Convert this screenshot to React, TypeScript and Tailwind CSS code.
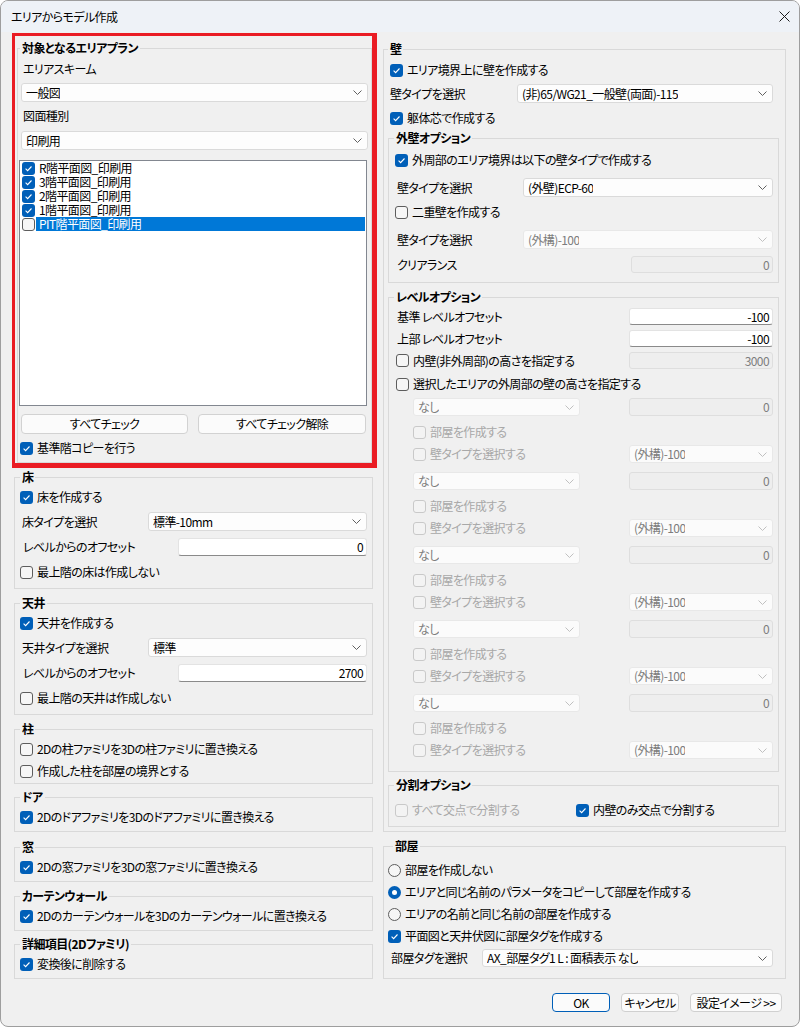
import React from "react";

function Box({ on, off }: { on?: boolean; off?: boolean }) {
  if (on)
    return (
      <span className="flex h-[13px] w-[13px] shrink-0 items-center justify-center rounded-[3px] bg-[#005fb8]">
        <svg width="9" height="9" viewBox="0 0 9 9">
          <path d="M1.6 4.7 3.6 6.6 7.5 2.5" fill="none" stroke="#ffffff" strokeWidth="1.1" />
        </svg>
      </span>
    );
  return (
    <span
      className={
        "h-[13px] w-[13px] shrink-0 rounded-[3px] border " +
        (off ? "border-[#c9c9c9] bg-[#f3f3f3]" : "border-[#5d5d5d] bg-[#f6f6f6]")
      }
    />
  );
}

function Radio({ on }: { on?: boolean }) {
  if (on)
    return (
      <span className="flex h-[13px] w-[13px] shrink-0 items-center justify-center rounded-full bg-[#005fb8]">
        <span className="h-[5px] w-[5px] rounded-full bg-white" />
      </span>
    );
  return <span className="h-[13px] w-[13px] shrink-0 rounded-full border border-[#5d5d5d] bg-[#f6f6f6]" />;
}

function Check({ label, on, off, className = "" }: { label: string; on?: boolean; off?: boolean; className?: string }) {
  return (
    <div className={"flex h-[16px] items-center gap-[4px] " + className}>
      <Box on={on} off={off} />
      <span className={"whitespace-nowrap " + (off ? "text-[#a8a8a8]" : "")}>{label}</span>
    </div>
  );
}

function RadioRow({ label, on, className = "" }: { label: string; on?: boolean; className?: string }) {
  return (
    <div className={"flex h-[16px] items-center gap-[4px] pl-[4px] " + className}>
      <Radio on={on} />
      <span className="whitespace-nowrap">{label}</span>
    </div>
  );
}

function Combo({ text, off, className = "" }: { text: string; off?: boolean; className?: string }) {
  return (
    <div
      className={
        "flex items-center justify-between rounded-[3px] border pl-[4px] pr-[5px] " +
        (off ? "border-[#e8e8e8] bg-[#fbfbfb] text-[#7d7d7d]" : "border-[#dadada] bg-[#fdfdfd]") +
        " " +
        className
      }
    >
      <span className="truncate whitespace-nowrap">{text}</span>
      <svg width="9" height="5" viewBox="0 0 9 5" className="shrink-0">
        <path d="M.5.5 4.5 4.5 8.5.5" fill="none" stroke={off ? "#c0c0c0" : "#606060"} />
      </svg>
    </div>
  );
}

function Num({ v, off, className = "" }: { v: string; off?: boolean; className?: string }) {
  return (
    <div
      className={
        "flex items-center justify-end rounded-[3px] border pr-[3px] " +
        (off ? "border-[#dedede] bg-[#eeeeee] text-[#7d7d7d]" : "border-[#e3e3e3] border-b-[#8a8a8a] bg-white") +
        " " +
        className
      }
    >
      {v}
    </div>
  );
}

function Legend({ title, className = "" }: { title: string; className?: string }) {
  return <legend className={"px-[2px] text-[12px] leading-[16px] font-bold " + className}>{title}</legend>;
}

const planItems: [string, boolean][] = [
  ["R階平面図_印刷用", true],
  ["3階平面図_印刷用", true],
  ["2階平面図_印刷用", true],
  ["1階平面図_印刷用", true],
  ["PIT階平面図_印刷用", false],
];

function HeightBlock({ first }: { first?: boolean }) {
  return (
    <div>
      <div className={"flex items-center pl-[24px] pr-[5px] " + (first ? "mt-[6px]" : "mt-[9px]")}>
        <Combo off text="なし" className="h-[18px] w-[167px]" />
        <Num off v="0" className="ml-auto h-[18px] w-[144px]" />
      </div>
      <Check off label="部屋を作成する" className="mt-[8px] pl-[24px]" />
      <div className="mt-[5px] flex items-center pl-[24px] pr-[5px]">
        <Check off label="壁タイプを選択する" />
        <Combo off text="(外構)-100" className="ml-auto h-[18px] w-[144px]" />
      </div>
    </div>
  );
}

export default function App() {
  return (
    <div className="h-[1028px] w-[801px] overflow-hidden bg-white font-['Noto_Sans_CJK_JP','Noto_Sans',sans-serif] text-[12px] leading-[16px] tracking-[-0.6px] text-black [font-feature-settings:'palt']">
      <div className="h-[1027px] w-[800px] overflow-hidden rounded-[8px] border border-[#9e9e9e] bg-[#f0f0f0]">
        {/* title bar */}
        <div className="flex h-[31px] items-center justify-between bg-[#eef2f7] pl-[10px] pr-[9px]">
          <span>エリアからモデル作成</span>
          <svg width="11" height="11" viewBox="0 0 11 11">
            <path d="M.5.5 10.5 10.5M10.5.5.5 10.5" stroke="#1a1a1a" strokeWidth="1" />
          </svg>
        </div>

        <div className="flex">
          {/* left column */}
          <div className="ml-[11px] mt-[1px] w-[365px]">
            <div className="border-[3px] border-r-[5px] border-b-[5px] border-[#ea1c24]">
              <fieldset className="ml-[2px] mt-[4px] border border-[#d9d9d9] pb-[6px]">
                <Legend title="対象となるエリアプラン" className="ml-[2px]" />
                <div className="mt-[3px] flex h-[20px] items-center pl-[5px]">エリアスキーム</div>
                <Combo text="一般図" className="mx-[3px] mt-[4px] h-[19px]" />
                <div className="mt-[4px] flex h-[20px] items-center pl-[5px]">図面種別</div>
                <Combo text="印刷用" className="mx-[3px] mt-[5px] h-[19px]" />
                <div className="ml-[1px] mt-[10px] h-[246px] w-[348px] border border-[#828790] bg-white pl-[2px] leading-[14px]">
                  {planItems.map(([t, on], i) => (
                    <div key={t} className="flex h-[14px] items-center">
                      <Box on={on} />
                      <span
                        className={
                          "ml-[1px] flex h-[14px] items-center whitespace-nowrap pl-[3px] " +
                          (i === 4 ? "w-[329px] bg-[#0078d7] text-white" : "")
                        }
                      >
                        {t}
                      </span>
                    </div>
                  ))}
                </div>
                <div className="ml-[3px] mt-[8px] flex gap-[10px]">
                  <button className="h-[20px] w-[167px] rounded-[4px] border border-[#d2d2d2] bg-[#fbfbfb]">すべてチェック</button>
                  <button className="h-[20px] w-[168px] rounded-[4px] border border-[#d2d2d2] bg-[#fbfbfb]">すべてチェック解除</button>
                </div>
                <Check on label="基準階コピーを行う" className="mt-[6px] pl-[2px]" />
              </fieldset>
            </div>

            <fieldset className="ml-[2px] mt-[1px] w-[359px] border border-[#d9d9d9] pb-[8px]">
              <Legend title="床" className="ml-[5px]" />
              <Check on label="床を作成する" className="mt-[4px] pl-[5px]" />
              <div className="mt-[7px] flex items-center pl-[7px] pr-[5px]">
                <span>床タイプを選択</span>
                <Combo text="標準-10mm" className="ml-auto h-[19px] w-[219px]" />
              </div>
              <div className="mt-[7px] flex items-center pl-[8px] pr-[5px]">
                <span>レベルからのオフセット</span>
                <Num v="0" className="ml-auto h-[18px] w-[189px]" />
              </div>
              <Check label="最上階の床は作成しない" className="mt-[8px] pl-[5px]" />
            </fieldset>

            <fieldset className="ml-[2px] mt-[6px] w-[359px] border border-[#d9d9d9] pb-[8px]">
              <Legend title="天井" className="ml-[5px]" />
              <Check on label="天井を作成する" className="mt-[4px] pl-[5px]" />
              <div className="mt-[7px] flex items-center pl-[7px] pr-[5px]">
                <span>天井タイプを選択</span>
                <Combo text="標準" className="ml-auto h-[19px] w-[219px]" />
              </div>
              <div className="mt-[7px] flex items-center pl-[8px] pr-[5px]">
                <span>レベルからのオフセット</span>
                <Num v="2700" className="ml-auto h-[18px] w-[189px]" />
              </div>
              <Check label="最上階の天井は作成しない" className="mt-[8px] pl-[5px]" />
            </fieldset>

            <fieldset className="ml-[2px] mt-[6px] w-[359px] border border-[#d9d9d9] pb-[4px]">
              <Legend title="柱" className="ml-[5px]" />
              <Check label="2Dの柱ファミリを3Dの柱ファミリに置き換える" className="mt-[4px] pl-[5px]" />
              <Check label="作成した柱を部屋の境界とする" className="mt-[6px] pl-[5px]" />
            </fieldset>

            <fieldset className="ml-[2px] mt-[5px] w-[359px] border border-[#d9d9d9] pb-[6px]">
              <Legend title="ドア" className="ml-[5px]" />
              <Check on label="2Dのドアファミリを3Dのドアファミリに置き換える" className="mt-[4px] pl-[5px]" />
            </fieldset>

            <fieldset className="ml-[2px] mt-[7px] w-[359px] border border-[#d9d9d9] pb-[6px]">
              <Legend title="窓" className="ml-[5px]" />
              <Check on label="2Dの窓ファミリを3Dの窓ファミリに置き換える" className="mt-[4px] pl-[5px]" />
            </fieldset>

            <fieldset className="ml-[2px] mt-[6px] w-[359px] border border-[#d9d9d9] pb-[6px]">
              <Legend title="カーテンウォール" className="ml-[5px]" />
              <Check on label="2Dのカーテンウォールを3Dのカーテンウォールに置き換える" className="mt-[4px] pl-[5px]" />
            </fieldset>

            <fieldset className="ml-[2px] mt-[5px] w-[359px] border border-[#d9d9d9] pb-[6px]">
              <Legend title="詳細項目(2Dファミリ)" className="ml-[5px]" />
              <Check on label="変換後に削除する" className="mt-[4px] pl-[5px]" />
            </fieldset>
          </div>

          {/* right column */}
          <div className="ml-[6px] mt-[9px] w-[403px]">
            <fieldset className="border border-[#d9d9d9] pb-[4px]">
              <Legend title="壁" className="ml-[4px]" />
              <Check on label="エリア境界上に壁を作成する" className="mt-[5px] pl-[6px]" />
              <div className="mt-[6px] flex items-center pl-[6px] pr-[12px]">
                <span>壁タイプを選択</span>
                <Combo text="(非)65/WG21_一般壁(両面)-115" className="ml-auto h-[19px] w-[256px]" />
              </div>
              <Check on label="躯体芯で作成する" className="mt-[7px] pl-[6px]" />

              <fieldset className="ml-[4px] mr-[6px] mt-[4px] border border-[#d9d9d9] pb-[9px]">
                <Legend title="外壁オプション" className="ml-[5px]" />
                <Check on label="外周部のエリア境界は以下の壁タイプで作成する" className="mt-[6px] pl-[6px]" />
                <div className="mt-[10px] flex items-center pl-[8px] pr-[5px]">
                  <span>壁タイプを選択</span>
                  <Combo text="(外壁)ECP-60" className="ml-auto h-[19px] w-[250px]" />
                </div>
                <Check label="二重壁を作成する" className="mt-[7px] pl-[6px]" />
                <div className="mt-[10px] flex items-center pl-[8px] pr-[5px]">
                  <span>壁タイプを選択</span>
                  <Combo off text="(外構)-100" className="ml-auto h-[19px] w-[250px]" />
                </div>
                <div className="mt-[7px] flex items-center pl-[8px] pr-[5px]">
                  <span>クリアランス</span>
                  <Num off v="0" className="ml-auto h-[17px] w-[142px]" />
                </div>
              </fieldset>

              <fieldset className="ml-[4px] mr-[6px] mt-[6px] border border-[#d9d9d9] pb-[12px]">
                <Legend title="レベルオプション" className="ml-[5px]" />
                <div className="mt-[3px] flex items-center pl-[8px] pr-[5px]">
                  <span>基準 レベルオフセット</span>
                  <Num v="-100" className="ml-auto h-[17px] w-[144px]" />
                </div>
                <div className="mt-[5px] flex items-center pl-[8px] pr-[5px]">
                  <span>上部 レベルオフセット</span>
                  <Num v="-100" className="ml-auto h-[17px] w-[144px]" />
                </div>
                <div className="mt-[5px] flex items-center pl-[7px] pr-[5px]">
                  <Check label="内壁(非外周部)の高さを指定する" />
                  <Num off v="3000" className="ml-auto h-[17px] w-[144px]" />
                </div>
                <Check label="選択したエリアの外周部の壁の高さを指定する" className="mt-[7px] pl-[7px]" />
                <HeightBlock first />
                <HeightBlock />
                <HeightBlock />
                <HeightBlock />
                <HeightBlock />
              </fieldset>

              <fieldset className="ml-[4px] mr-[6px] mt-[5px] border border-[#d9d9d9] pb-[8px]">
                <Legend title="分割オプション" className="ml-[5px]" />
                <div className="mt-[9px] flex items-center pl-[6px]">
                  <Check off label="すべて交点で分割する" className="w-[181px]" />
                  <Check on label="内壁のみ交点で分割する" />
                </div>
              </fieldset>
            </fieldset>

            <fieldset className="mt-[6px] border border-[#d9d9d9] pb-[11px]">
              <Legend title="部屋" className="ml-[9px]" />
              <RadioRow label="部屋を作成しない" className="mt-[8px]" />
              <RadioRow on label="エリアと同じ名前のパラメータをコピーして部屋を作成する" className="mt-[6px]" />
              <RadioRow label="エリアの名前と同じ名前の部屋を作成する" className="mt-[6px]" />
              <Check on label="平面図と天井伏図に部屋タグを作成する" className="mt-[6px] pl-[4px]" />
              <div className="mt-[5px] flex items-center pl-[7px] pr-[12px]">
                <span>部屋タグを選択</span>
                <Combo text="AX_部屋タグ1 L : 面積表示 なし" className="ml-auto h-[18px] w-[291px]" />
              </div>
            </fieldset>

            <div className="mt-[14px] flex justify-end gap-[11px] pr-[4px]">
              <button className="h-[19px] w-[58px] rounded-[4px] border border-[#005fb8] bg-[#fbfbfb]">OK</button>
              <button className="h-[19px] w-[58px] rounded-[4px] border border-[#d0d0d0] bg-[#fbfbfb]">キャンセル</button>
              <button className="h-[19px] w-[92px] rounded-[4px] border border-[#d0d0d0] bg-[#fbfbfb]">設定イメージ &gt;&gt;</button>
            </div>
          </div>
        </div>
      </div>
    </div>
  );
}
